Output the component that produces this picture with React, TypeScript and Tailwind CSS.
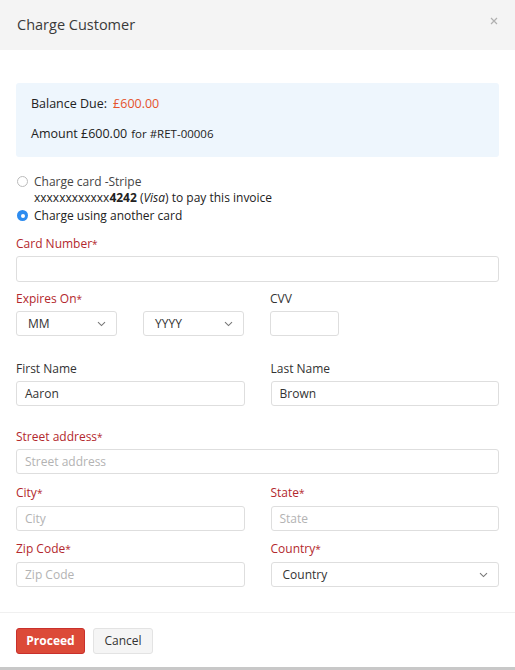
import React from "react";

const red = "text-[#b3282d]";

function Label({ children, required }: { children: React.ReactNode; required?: boolean }) {
  return (
    <div className={`text-[12px] leading-[14px] ${required ? red : "text-[#333]"}`}>
      {children}
      {required ? <span className="text-[10px] align-top">*</span> : null}
    </div>
  );
}

function Input({ value, placeholder, className = "" }: { value?: string; placeholder?: string; className?: string }) {
  return (
    <div
      className={`h-[25px] border border-[#dedede] rounded-[3px] bg-white flex items-center px-[8px] text-[12px] ${
        value ? "text-[#333]" : "text-[#b3b3b3]"
      } ${className}`}
    >
      {value || placeholder || ""}
    </div>
  );
}

function Chevron() {
  return (
    <svg width="9" height="6" viewBox="0 0 9 6" fill="none">
      <path d="M1 1.2 L4.5 4.6 L8 1.2" stroke="#777" strokeWidth="1.1" />
    </svg>
  );
}

function Select({ value, className = "" }: { value: string; className?: string }) {
  return (
    <div
      className={`h-[25px] border border-[#dedede] rounded-[3px] bg-white flex items-center justify-between pl-[11px] pr-[10px] text-[12px] text-[#333] ${className}`}
    >
      <span>{value}</span>
      <Chevron />
    </div>
  );
}

export default function App() {
  return (
    <div
      className="w-[515px] h-[670px] bg-white relative border-b-[3px] border-[#c8c8c8] flex flex-col"
      style={{ fontFamily: '"Open Sans", "Liberation Sans", sans-serif' }}
    >
      <div className="h-[50px] bg-[#f4f4f4] flex items-center justify-between pl-[17px] pr-[17px] shrink-0">
        <div className="text-[14.5px] text-[#3a3a3a]">Charge Customer</div>
        <svg width="8" height="8" viewBox="0 0 8 8" className="mb-[8px]">
          <path d="M1 1 L7 7 M7 1 L1 7" stroke="#b0b0b0" strokeWidth="1.2" />
        </svg>
      </div>

      <div className="px-[16px] pt-[33px] flex-1">
        <div className="h-[74px] bg-[#eef6fd] rounded-[3px] pl-[15px] pt-[13px] text-[#222]">
          <div className="text-[12.5px] leading-[16px] flex items-center">
            <span>Balance Due:</span>
            <span className="ml-[6px] text-[#e5532d]">£600.00</span>
          </div>
          <div className="mt-[14px] leading-[16px] flex items-baseline">
            <span className="text-[12.5px]">Amount £600.00</span>
            <span className="ml-[4px] text-[11.5px]">for #RET-00006</span>
          </div>
        </div>

        <div className="mt-[17px] text-[12px] text-[#222]">
          <div className="flex items-start">
            <div className="w-[11px] h-[11px] rounded-full border border-[#bbb] bg-white ml-[1px] mt-[2px] shrink-0" />
            <div className="ml-[6px] leading-[15.5px]">
              <div className="text-[#444]">Charge card -Stripe</div>
              <div>
                xxxxxxxxxxxx<b>4242</b> (<i>Visa</i>) to pay this invoice
              </div>
            </div>
          </div>
          <div className="flex items-center mt-[3px]">
            <div className="w-[11px] h-[11px] rounded-full bg-[#2d8cf0] ml-[1px] flex items-center justify-center shrink-0">
              <div className="w-[4px] h-[4px] rounded-full bg-white" />
            </div>
            <div className="ml-[6px] leading-[15px]">Charge using another card</div>
          </div>
        </div>

        <div className="mt-[14px]">
          <Label required>Card Number</Label>
          <Input className="mt-[5px] h-[26px]" />
        </div>

        <div className="mt-[10px] flex">
          <div className="w-[228px]">
            <Label required>Expires On</Label>
            <div className="mt-[5px] flex gap-[26px]">
              <Select value="MM" className="w-[101px]" />
              <Select value="YYYY" className="w-[101px]" />
            </div>
          </div>
          <div className="ml-[26px]">
            <Label>CVV</Label>
            <Input className="mt-[5px] w-[69px]" />
          </div>
        </div>

        <div className="mt-[26px] grid grid-cols-2 gap-x-[26px]">
          <div>
            <Label>First Name</Label>
            <Input className="mt-[5px]" value="Aaron" />
          </div>
          <div>
            <Label>Last Name</Label>
            <Input className="mt-[5px]" value="Brown" />
          </div>
        </div>

        <div className="mt-[24px]">
          <Label required>Street address</Label>
          <Input className="mt-[5px]" placeholder="Street address" />
        </div>

        <div className="mt-[12px] grid grid-cols-2 gap-x-[26px]">
          <div>
            <Label required>City</Label>
            <Input className="mt-[6px]" placeholder="City" />
          </div>
          <div>
            <Label required>State</Label>
            <Input className="mt-[6px]" placeholder="State" />
          </div>
        </div>

        <div className="mt-[11px] grid grid-cols-2 gap-x-[26px]">
          <div>
            <Label required>Zip Code</Label>
            <Input className="mt-[6px]" placeholder="Zip Code" />
          </div>
          <div>
            <Label required>Country</Label>
            <Select value="Country" className="mt-[6px]" />
          </div>
        </div>
      </div>

      <div className="border-t border-[#f0f0f0] h-[55px] px-[16px] pt-[15px] flex gap-[8px] shrink-0">
        <button className="h-[26px] w-[69px] bg-[#dc4a38] border border-[#c9302c] rounded-[3px] text-white text-[12px] font-bold">
          Proceed
        </button>
        <button className="h-[26px] w-[60px] bg-[#f5f5f5] border border-[#e3e3e3] rounded-[3px] text-[#333] text-[12px]">
          Cancel
        </button>
      </div>
    </div>
  );
}
